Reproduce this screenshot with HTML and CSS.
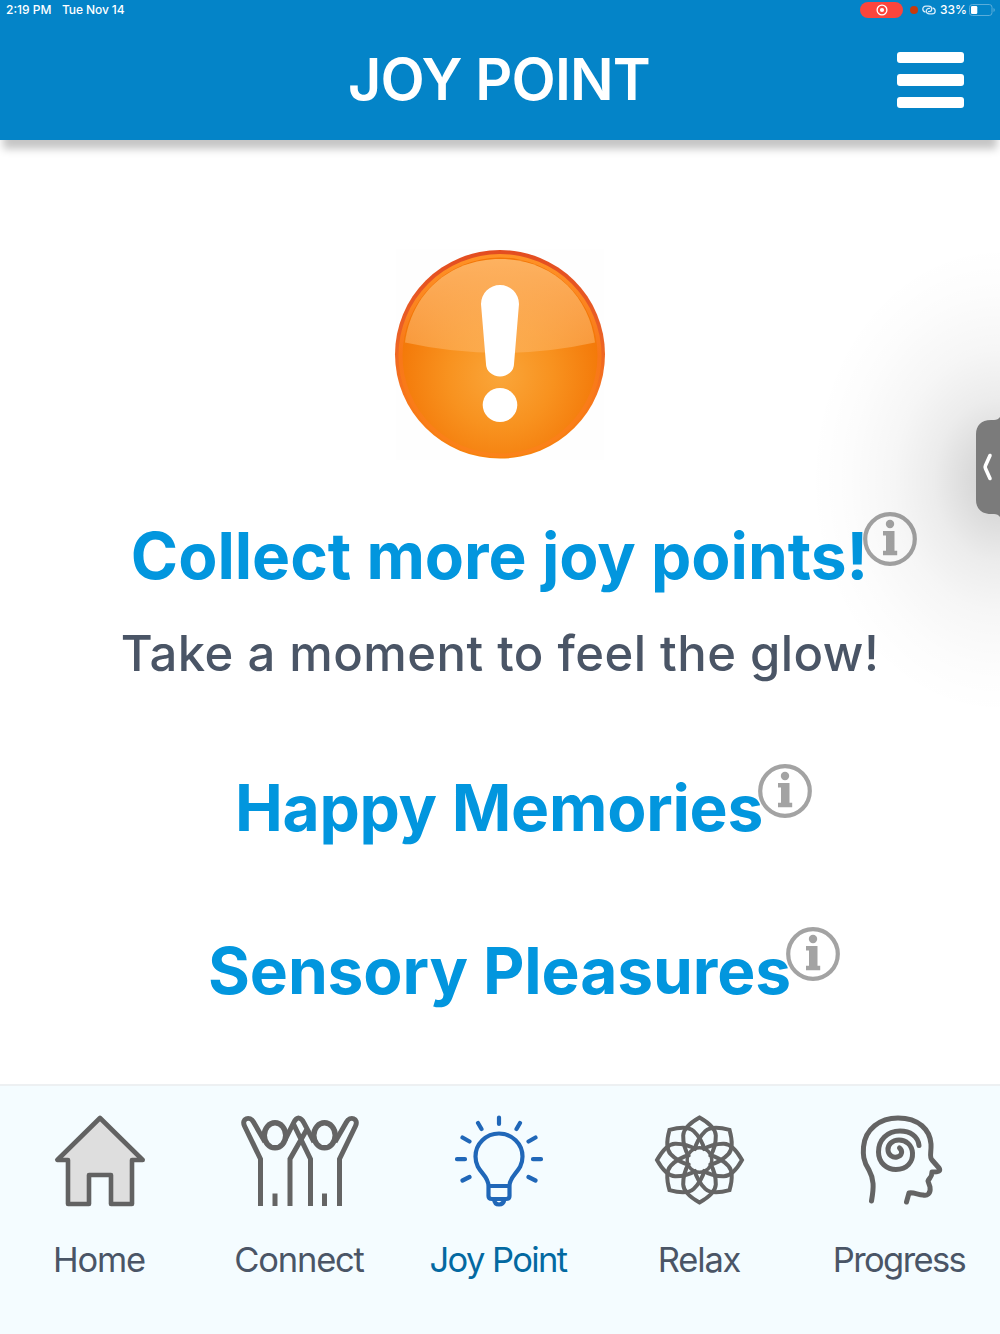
FILE: index.html
```html
<!DOCTYPE html>
<html lang="en">
<head>
<meta charset="utf-8">
<title>Joy Point</title>
<link rel="stylesheet" href="styles.css">
</head>
<body>
<svg class="defs" width="0" height="0" aria-hidden="true">
  <symbol id="info" viewBox="0 0 54 54">
    <circle cx="27" cy="27" r="24.8" fill="none" stroke="#a3a3a3" stroke-width="4.2"/>
    <circle cx="27" cy="12" r="4.2" fill="#a3a3a3"/>
    <path d="M20 19H31.5V38.8H34.2V43.3H20V38.8H23V23.500H20Z" fill="#a3a3a3"/>
  </symbol>
</svg>
<div class="app">
  <header class="header">
    <div class="status">
      <span class="time">2:19 PM</span>
      <span class="date">Tue Nov 14</span>
      <span class="record"><svg width="12" height="12" viewBox="0 0 12 12"><circle cx="6" cy="6" r="4.9" fill="none" stroke="#fff" stroke-width="1.3"/><circle cx="6" cy="6" r="2.1" fill="#fff"/></svg></span>
      <span class="dot"></span>
      <svg class="link" width="14" height="10" viewBox="0 0 14 10" fill="none" stroke="#d5eafa" stroke-width="1.3"><path d="M3.500 7.200C1.500 6.700.8 5.500.8 4.100C.8 2.300 2 1.200 4 1.200H6.500C8.600 1.200 9.700 2.500 9.700 4C9.700 5.500 8.500 6.600 7 6.600H6"/><path d="M10.500 2.800C12.500 3.300 13.200 4.500 13.200 5.900C13.200 7.700 12 8.800 10 8.800H7.500C5.400 8.800 4.300 7.500 4.300 6C4.300 4.500 5.500 3.400 7 3.400H8"/></svg>
      <span class="percent">33%</span>
      <svg class="battery" width="26" height="12" viewBox="0 0 26 12"><rect x=".5" y=".5" width="22.500" height="11" rx="2.800" fill="none" stroke="#5badda"/><rect x="2" y="2" width="6.300" height="8" rx="1.300" fill="#fff"/><path d="M24.500 4V8Q25.800 7.300 25.800 6T24.500 4Z" fill="#5badda"/></svg>
    </div>
    <div class="titlebar">
      <h1 class="title">JOY POINT</h1>
      <button class="menu" aria-label="Menu"><i></i><i></i><i></i></button>
    </div>
  </header>

  <main class="main">
    <svg class="alert" width="212" height="212" viewBox="0 0 212 212">
      <defs>
        <linearGradient id="rim" x1="0" y1="0" x2="0" y2="1"><stop offset="0" stop-color="#e34d20"/><stop offset=".4" stop-color="#ea6026"/><stop offset=".7" stop-color="#f8761b"/><stop offset="1" stop-color="#f7830d"/></linearGradient>
        <linearGradient id="edge" x1="0" y1="0" x2="0" y2="1"><stop offset="0" stop-color="#ff9225"/><stop offset=".5" stop-color="#f87719"/><stop offset="1" stop-color="#fb8219"/></linearGradient>
        <radialGradient id="ball" cx=".5" cy=".6" r=".54"><stop offset="0" stop-color="#faa63a"/><stop offset=".5" stop-color="#f8921f"/><stop offset="1" stop-color="#f37707"/></radialGradient>
        <linearGradient id="gloss" x1="0" y1="0" x2="0" y2="1"><stop offset="0" stop-color="#ffbc70" stop-opacity=".85"/><stop offset="1" stop-color="#ffbf78" stop-opacity=".42"/></linearGradient>
      </defs>
      <rect x="2" width="208" height="211" fill="#fefefe"/>
      <ellipse cx="106" cy="105.300" rx="105" ry="104.300" fill="url(#rim)"/>
      <ellipse cx="106" cy="106.500" rx="101.500" ry="101.500" fill="url(#edge)"/>
      <ellipse cx="106" cy="106.500" rx="97.500" ry="98" fill="url(#ball)"/>
      <path d="M11 93.500C17 46 54 10 106 10S195 46 201 93.500Q153 104 106 104T11 93.500Z" fill="url(#gloss)"/>
      <path d="M87 55A19 19 0 0 1 125 55L120 115A14 12.500 0 0 1 92 115Z" fill="#fff"/>
      <ellipse cx="106" cy="156" rx="17.300" ry="17" fill="#fff"/>
    </svg>
    <h2 class="heading collect">Collect more joy points!<svg class="info"><use href="#info"/></svg></h2>
    <p class="subtitle">Take a moment to feel the glow!</p>
    <h2 class="heading happy">Happy Memories<svg class="info"><use href="#info"/></svg></h2>
    <h2 class="heading sensory">Sensory Pleasures<svg class="info"><use href="#info"/></svg></h2>
  </main>

  <nav class="nav">
    <a class="item home">
      <svg class="icon" width="120" height="100" viewBox="40 1110 120 100" fill="#dedede" stroke="#626262" stroke-width="4.600" stroke-linejoin="round"><path d="M100 1118L57.300 1160H68V1204H89V1175H111V1204H132V1160H142.700Z"/></svg>
      <span class="label">Home</span>
    </a>
    <a class="item connect">
      <svg class="icon" width="120" height="100" viewBox="240 1110 120 100" fill="none" stroke="#646464" stroke-width="5"><path d="M260.500 1206V1159L244.500 1126C241 1118.500 250 1115.500 253.500 1122L265 1142M290 1206V1159L306.500 1130M285 1140L293.500 1123C297 1116 301 1117 304 1123L314 1142M310.500 1206V1159L293.500 1124M339.500 1206V1159L355.500 1126C359 1118.500 350 1115.500 346.500 1122L335 1142M275 1206V1193.500M324.500 1206V1193.500"/><ellipse cx="275" cy="1135.300" rx="10.700" ry="12.500" stroke-width="5.400"/><ellipse cx="324.500" cy="1135.300" rx="10.700" ry="12.500" stroke-width="5.400"/></svg>
      <span class="label">Connect</span>
    </a>
    <a class="item joy active">
      <svg class="icon" width="120" height="100" viewBox="440 1110 120 100" fill="none" stroke="#2067b8" stroke-width="4.200"><path d="M488.500 1186C488.500 1174 475.500 1172 475.500 1156.500A23.500 23 0 0 1 522.500 1156.500C522.500 1172 509.500 1174 509.500 1186V1196Q509.500 1199 506 1199H492Q488.500 1199 488.500 1196ZM488.500 1186H509.500M494 1199Q494.500 1204.500 499 1204.500T504.500 1199"/><path d="M499 1117.500V1124M478 1123L481.500 1129M520 1123L516.500 1129M462.500 1137.500L469.500 1141.500M535.500 1137.500L528.500 1141.500M457 1159.200H465M533 1159.200H541M462.500 1180.500L469.500 1177M535.500 1180.500L528.500 1177" stroke-linecap="round"/></svg>
      <span class="label">Joy Point</span>
    </a>
    <a class="item relax">
      <svg class="icon" width="120" height="100" viewBox="-59.500 -50 120 100" fill="none" stroke="#646464" stroke-width="4"><circle r="12.300" stroke-width="3.400"/>
        <g id="pair"><path id="leaf" d="M-10.500-3C-14.500-10-16.500-17-16.300-24.500C-16-32-8-38 0-42.500C8-38 16-32 16.300-24.500C16.500-17 14.500-10 10.500-3"/><use href="#leaf" transform="rotate(45)"/></g>
        <use href="#pair" transform="rotate(90)"/><use href="#pair" transform="rotate(180)"/><use href="#pair" transform="rotate(270)"/>
      </svg>
      <span class="label">Relax</span>
    </a>
    <a class="item progress">
      <svg class="icon" width="120" height="100" viewBox="840 1110 120 100" fill="none" stroke="#646464" stroke-width="5" stroke-linecap="round" stroke-linejoin="round"><path d="M871.500 1201C874 1187 874 1179 869 1170C863 1161 863 1154 863.500 1147C865 1129 880 1118 898 1118C919 1118 930 1130 931 1144C931.500 1152 929 1157 932 1160L939 1168C941 1171 939 1172 932 1172C932 1178 929 1178 928 1181L930 1187C931 1194 927 1196 923 1195C918 1195 914 1192 909 1193L906.500 1202"/><path d="M919 1145.500C918 1136 910 1131 900 1131C887 1131 878.500 1140 878.500 1152C878.500 1163 887 1169.500 896 1169.500C907 1169.500 913 1162 912.500 1153C912 1145 906 1140 899 1140C892 1140 887.500 1145 888 1150C888 1155 893 1158 897 1157C902 1156 903 1151 899.500 1148"/></svg>
      <span class="label">Progress</span>
    </a>
  </nav>

  <div class="glow"></div>
  <div class="drawer"><svg width="24" height="102" viewBox="0 0 24 102"><path d="M24 1V101Q22 98 18 98H15C5 98 0 92 0 84V18C0 10 5 4 15 4H18Q22 4 24 1Z" fill="#7b7b7b"/><path d="M14 39.500L9.500 49.500Q8.800 51 9.500 52.500L14 62.500" fill="none" stroke="#fff" stroke-width="3.600" stroke-linecap="round" stroke-linejoin="round"/></svg></div>
</div>
</body>
</html>
```
FILE: styles.css
```css
* { box-sizing: border-box; }
body { margin: 0; background: #fff; font-family: Inter, "Liberation Sans", sans-serif; }
h1, h2, p { margin: 0; }
.defs { position: absolute; }
.app { position: relative; width: 1000px; height: 1334px; overflow: hidden; display: flex; flex-direction: column; }

.header { flex: none; height: 140px; background: #0484c8; color: #fff; box-shadow: 0 12px 8px -3px #c6c6c6; }
.status { height: 20px; display: flex; align-items: center; padding: 0 5px 0 6px; font-size: 12px; font-weight: 500; line-height: 20px; }
.time { width: 56px; white-space: nowrap; }
.date { letter-spacing: -.1px; }
.record { margin-left: auto; width: 43px; height: 16px; border-radius: 8px; background: #fb453c; display: flex; align-items: center; justify-content: center; }
.dot { width: 8px; height: 8px; border-radius: 50%; background: #c93a0c; margin-left: 7px; }
.link { margin-left: 4px; }
.percent { width: 28px; margin-left: 4px; white-space: nowrap; }
.battery { margin-left: 1px; }
.titlebar { height: 120px; display: grid; grid-template-columns: 1fr auto 1fr; align-items: center; padding: 0 36px; }
.title { grid-column: 2; font-size: 57.500px; line-height: 70px; font-weight: 600; letter-spacing: -.85px; padding: 0 2px 2px 0; white-space: nowrap; }
.menu { justify-self: end; border: 0; padding: 0; background: none; display: flex; flex-direction: column; gap: 11px; width: 67.500px; }
.menu i { height: 11.500px; border-radius: 3px; background: #fff; }

.main { height: 944px; display: flex; flex-direction: column; align-items: center; padding-top: 109px; }
.alert { display: block; flex: none; }
.heading { position: relative; font-size: 64px; line-height: 80px; font-weight: 700; color: #0296de; white-space: nowrap; }
.collect { margin-top: 55px; margin-right: 1px; }
.subtitle { margin-top: 28px; font-size: 49px; line-height: 60px; font-weight: 500; letter-spacing: .47px; color: #4a5566; white-space: nowrap; }
.happy { margin-top: 84px; margin-right: 2px; letter-spacing: -.25px; }
.sensory { margin-top: 83px; margin-right: 1px; letter-spacing: -.1px; }
.info { position: absolute; left: 100%; top: -4px; width: 54px; height: 54px; margin-left: -5px; }

.nav { height: 250px; background: #f4fcff; border-top: 2px solid #edf0f2; display: grid; grid-template-columns: repeat(5, 200px); padding-top: 24px; }
.item { display: flex; flex-direction: column; align-items: center; gap: 30px; color: #4a5566; }
.icon { display: block; flex: none; }
.label { font-size: 34.500px; line-height: 40px; font-weight: 400; letter-spacing: -1.200px; padding-right: 2px; white-space: nowrap; }
.joy .label, .progress .label { letter-spacing: -1.600px; }
.joy .label { padding-right: 4px; }
.active { color: #0369a1; }

.glow { position: absolute; right: 0; top: 240px; width: 190px; height: 480px; pointer-events: none; background: radial-gradient(ellipse 190px 235px at 100% 50%, rgba(0, 0, 0, .19), rgba(0, 0, 0, .145) 15%, rgba(0, 0, 0, .075) 35%, rgba(0, 0, 0, .035) 56%, rgba(0, 0, 0, .01) 80%, transparent); }
.drawer { position: absolute; right: 0; top: 416px; height: 102px; }
```
